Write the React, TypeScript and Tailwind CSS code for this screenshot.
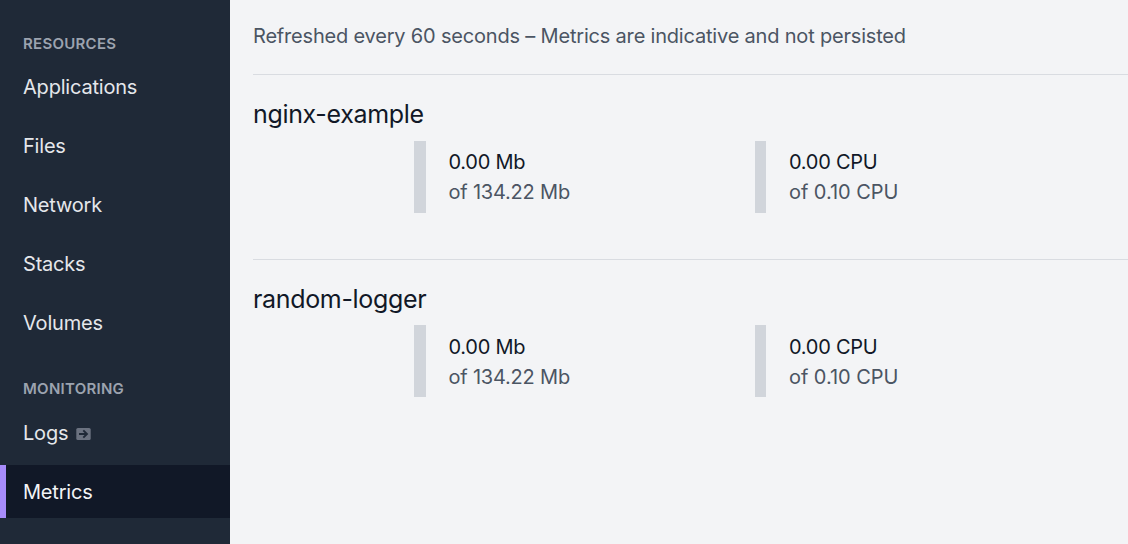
const nav = "h-[53px] mb-[6px] flex items-center pl-[23px] text-[20px] tracking-[-0.2px]";
const label = "pl-[23px] text-[15px] leading-[20px] font-semibold tracking-[0.27px] text-[#9ca3af]";
const items = ["Applications", "Files", "Network", "Stacks", "Volumes"];

function Metric({ used, limit, first }: { used: string; limit: string; first?: boolean }) {
  return (
    <div className={first ? "w-[340.5px] shrink-0 flex" : "flex"}>
      <div className="w-[11.5px] h-[72px] bg-[#d1d5db]" />
      <div className="ml-[23px] pt-[6.5px] text-[20px] leading-[30px]">
        <div className="tracking-[-0.25px] text-[#111827]">{used}</div>
        <div className={first ? "tracking-[-0.2px] text-[#4b5563]" : "tracking-[-0.05px] text-[#4b5563]"}>{limit}</div>
      </div>
    </div>
  );
}

function Service({ name }: { name: string }) {
  return (
    <section className="h-[184.5px] border-t border-[#d9dce1] pt-[21px]">
      <h2 className="h-[44.5px] text-[25px] leading-[36px] tracking-[-0.33px] text-[#111827]">{name}</h2>
      <div className="flex pl-[161px]">
        <Metric first used="0.00 Mb" limit="of 134.22 Mb" />
        <Metric used="0.00 CPU" limit="of 0.10 CPU" />
      </div>
    </section>
  );
}

export default function App() {
  return (
    <div className="flex w-full h-[544px] overflow-hidden bg-[#f3f4f6] font-['Inter',sans-serif]">
      <aside className="w-[230px] shrink-0 bg-[#1f2937] pt-[34px] text-[#e5e7eb]">
        <div className={`h-[26px] ${label}`}>RESOURCES</div>
        <nav>
          {items.map((t) => (
            <div key={t} className={nav}>{t}</div>
          ))}
        </nav>
        <div className={`mt-[30px] h-[27px] ${label}`}>MONITORING</div>
        <nav>
          <div className={nav}>
            Logs
            <svg className="ml-[8px] mt-[3px]" width="15" height="12" viewBox="0 0 15 12">
              <rect x="0.3" width="14.4" height="12" rx="1.6" fill="#6b7280" />
              <path d="M3 6h7.8M7.3 2.3 11 6 7.3 9.7" fill="none" stroke="#1f2937" strokeWidth="1.9" />
            </svg>
          </div>
          <div className="h-[53px] flex items-center border-l-[6px] border-[#a78bfa] bg-[#111827] pl-[17px] text-[20px] tracking-[-0.2px] text-[#f3f4f6]">Metrics</div>
        </nav>
      </aside>
      <main className="flex-1 min-w-0 pl-[23px] pt-[21px]">
        <p className="h-[53px] text-[20px] leading-[30px] tracking-[-0.19px] text-[#4b5563]">Refreshed every 60 seconds – Metrics are indicative and not persisted</p>
        <Service name="nginx-example" />
        <Service name="random-logger" />
      </main>
    </div>
  );
}
